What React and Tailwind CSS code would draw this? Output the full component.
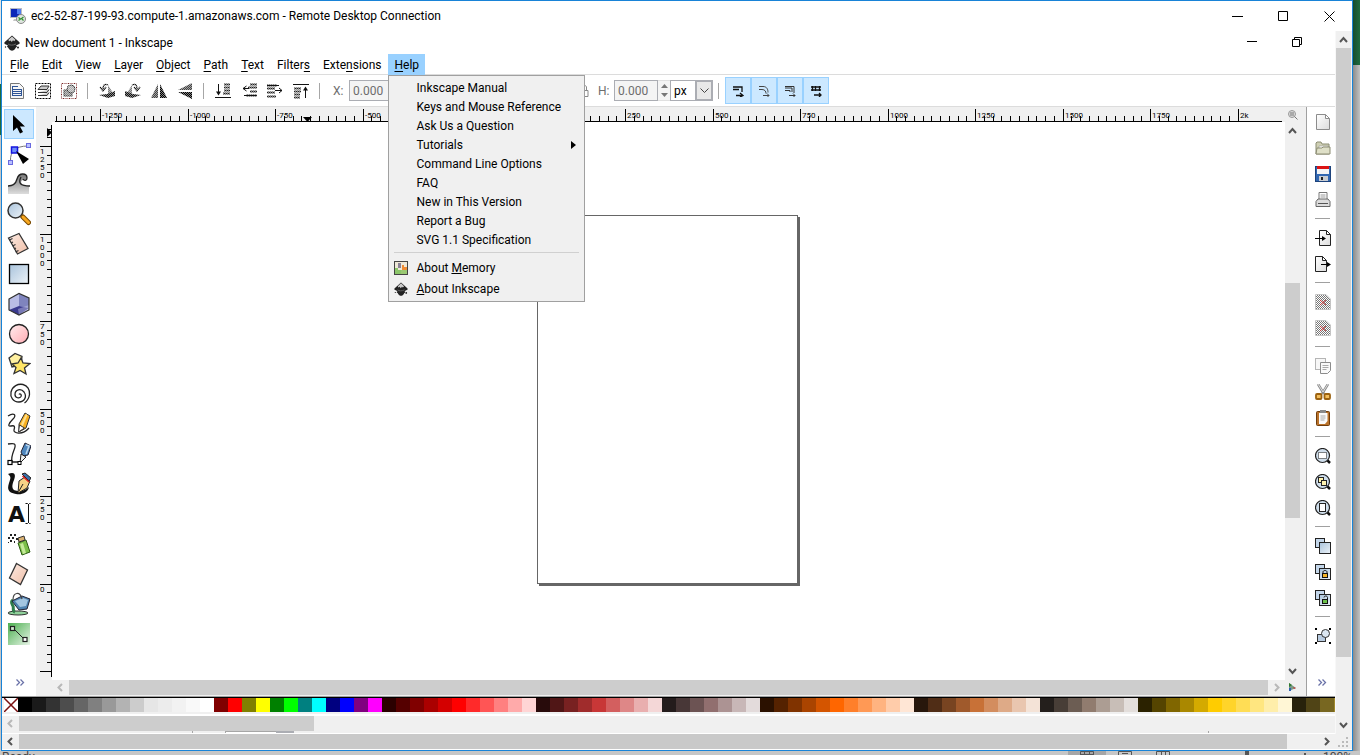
const PALETTE = [
  "#000000", "#1a1a1a", "#333333", "#4d4d4d", "#666666", "#808080", "#999999", "#b3b3b3", "#cccccc", "#e6e6e6", "#ececec", "#f2f2f2", "#f9f9f9", "#ffffff",
  "#800000", "#ff0000", "#808000", "#ffff00", "#008000", "#00ff00", "#008080", "#00ffff", "#000080", "#0000ff", "#800080", "#ff00ff",
  "#2b0000", "#550000", "#800000", "#aa0000", "#d40000", "#ff0000", "#ff2a2a", "#ff5555", "#ff8080", "#ffaaaa", "#ffd5d5",
  "#280b0b", "#501616", "#782121", "#a02c2c", "#c83737", "#d35f5f", "#de8787", "#e9afaf", "#f4d7d7",
  "#241c1c", "#483737", "#6c5353", "#916f6f", "#ac9393", "#c8b7b7", "#e3dbdb",
  "#2b1100", "#552200", "#803300", "#aa4400", "#d45500", "#ff6600", "#ff7f2a", "#ff9955", "#ffb380", "#ffccaa", "#ffe6d5",
  "#28170b", "#502d16", "#784421", "#a05a2c", "#c87137", "#d38d5f", "#deaa87", "#e9c6af", "#f4e3d7",
  "#241f1c", "#483e37", "#6c5d53", "#917c6f", "#ac9d93", "#c8beb7", "#e3dedb",
  "#2b2200", "#554400", "#806600", "#aa8800", "#d4aa00", "#ffcc00", "#ffd42a", "#ffdd55", "#ffe680", "#ffeeaa", "#fff6d5",
  "#28220b", "#504416", "#786721", "#a0892c",
];

// [before, mnemonic, after]
const MENUS = [
  ["", "F", "ile"],
  ["", "E", "dit"],
  ["", "V", "iew"],
  ["", "L", "ayer"],
  ["", "O", "bject"],
  ["", "P", "ath"],
  ["", "T", "ext"],
  ["Filter", "s", ""],
  ["Exte", "n", "sions"],
  ["", "H", "elp"],
];

const HELP_ITEMS = [
  "Inkscape Manual",
  "Keys and Mouse Reference",
  "Ask Us a Question",
  "Tutorials",
  "Command Line Options",
  "FAQ",
  "New in This Version",
  "Report a Bug",
  "SVG 1.1 Specification",
];

const STEP = 8.75;

function Icon({ size = 24, box = 24, children }) {
  return (
    <svg width={size} height={size} viewBox={`0 0 ${box} ${box}`} fill="none" aria-hidden="true" className="shrink-0">
      {children}
    </svg>
  );
}

function Defs() {
  return (
    <svg width="0" height="0" className="absolute" aria-hidden="true">
      <defs>
        <linearGradient id="blue" x1="0" y1="0" x2="1" y2="1">
          <stop offset="0" stopColor="#a9c3dc" />
          <stop offset="1" stopColor="#edf3f8" />
        </linearGradient>
        <linearGradient id="pink" x1="0" y1="0" x2="1" y2="1">
          <stop offset="0" stopColor="#ffeeee" />
          <stop offset="1" stopColor="#ffabb3" />
        </linearGradient>
        <linearGradient id="tan" x1="0" y1="0" x2="1" y2="1">
          <stop offset="0" stopColor="#fbeae2" />
          <stop offset="1" stopColor="#f0bfa8" />
        </linearGradient>
        <linearGradient id="green" x1="0" y1="0" x2="1" y2="1">
          <stop offset="0" stopColor="#4caf50" />
          <stop offset="1" stopColor="#e8f5e8" />
        </linearGradient>
        <linearGradient id="gray" x1="0" y1="0" x2="0" y2="1">
          <stop offset="0" stopColor="#777" />
          <stop offset="1" stopColor="#ddd" />
        </linearGradient>
        <linearGradient id="sheet" x1="0" y1="0" x2="1" y2="1">
          <stop offset="0" stopColor="#fff" />
          <stop offset="1" stopColor="#dcdcdc" />
        </linearGradient>
        <pattern id="dots" width="2" height="2" patternUnits="userSpaceOnUse">
          <rect width="1" height="1" fill="#fff" shapeRendering="crispEdges" />
          <rect x="1" y="1" width="1" height="1" fill="#fff" shapeRendering="crispEdges" />
        </pattern>
      </defs>
    </svg>
  );
}

function InkscapeLogo({ size }) {
  return (
    <Icon size={size} box={16}>
      <path d="M8 .5 15.200 7c1 1 .3 2-1.200 2.500L12 10.500c1.500.6 1 1.500 0 2-.8.5-.5 1-1 1.500-1 1.200-2 1.700-3 1.700S6 15.200 5 14c-.5-.5-.2-1-1-1.500-1-.5-1.500-1.400 0-2l-2-1C.5 9-.2 8 .8 7z" fill="#222" />
      <path d="m8 1.500 3.500 3.300-1.300 1.400L9 5.300 7.800 7 6.500 5.500 5 6.300l-.6-1.500z" fill="#ccc" />
      <path d="M4 9c2 1.500 5 1.500 8 0" stroke="#777" strokeWidth=".8" />
      <circle cx="14" cy="12.500" r="1" fill="#222" />
      <circle cx="1.500" cy="12" r=".7" fill="#222" />
    </Icon>
  );
}

function RemoteIcon() {
  return (
    <Icon size={16} box={16}>
      <rect x=".5" y=".5" width="11" height="9" fill="#0a26b8" stroke="#b8bcc4" />
      <path d="M7 1h4v5H7z" fill="#4f7cf0" />
      <path d="M4 11h4l1 2H3z" fill="#c4c4c4" />
      <circle cx="11" cy="11" r="4.500" fill="#dfe5df" stroke="#8a8a8a" />
      <path d="m8.500 9.500 2 1.500-2 1.500M13.500 9l-2 1.500 2 2" stroke="#2f8f2f" strokeWidth="1.200" />
    </Icon>
  );
}

const TOOLS = [
  ["Select", <path d="M6 3v16l4-3.500 3 6 3-1.500-3-5.500h5z" fill="#000" />],
  ["Edit nodes", <>
    <path d="M3.500 19C3 10 8 4 21 4" stroke="#777" />
    <rect x="1.500" y="18.500" width="4" height="4" fill="#b8c0ff" stroke="#6a6ae0" />
    <rect x="19.500" y="1.500" width="4" height="4" fill="#b8c0ff" stroke="#6a6ae0" />
    <rect x="4.500" y="5" width="6" height="6" fill="#6d8cf8" stroke="#1414e0" strokeWidth="1.500" />
    <path d="m9 9 13 8-6 5z" fill="#000" />
  </>],
  ["Tweak", <>
    <path d="M1 22v-8c5 0 8-2 9-7 1-6 10-6 10-1 0 2-2 3-3 2-4-1-5 6 5 6v8z" fill="url(#gray)" />
    <path d="M1 14c6 0 8-3 9-7 2-7 10-6 10-1 0 3-3 3-4 1M14 5c-3 6-1 9 9 9" stroke="#222" strokeWidth="1.300" />
  </>],
  ["Zoom", <>
    <circle cx="8.500" cy="8.500" r="7.500" fill="url(#blue)" stroke="#333" strokeWidth="1.500" />
    <path d="m14 14 3 2" stroke="#555" strokeWidth="3" />
    <path d="m16 15 5.500 5.500" stroke="#7a4a00" strokeWidth="5" strokeLinecap="round" />
    <path d="m16 15 5.500 5.500" stroke="#f8a820" strokeWidth="3" strokeLinecap="round" />
  </>],
  ["Measure", <>
    <path d="M1.500 6 12 1.500l9 15L10.500 22z" fill="url(#tan)" stroke="#333" strokeWidth="1.300" />
    <path d="m2.500 8 3-1.500m-1.500 4.500 2-1m-.5 4 3-1.500m-1.500 4.500 2-1m-.5 4 3-1.500" stroke="#333" strokeWidth="1.200" />
  </>],
  ["Rectangle", <rect x="2.500" y="2.500" width="19" height="19" fill="url(#blue)" stroke="#000" strokeWidth="1.300" />],
  ["3D box", <>
    <path d="m2 7 10-5.500L22 6v12l-10 5-10-5z" fill="#b9bde6" />
    <path d="m12 1.500 10 4.500v10l-10-2z" fill="#7f84be" />
    <path d="M2 18 12 14l10 2-10 7z" fill="#3a3a90" />
    <path d="m12 23-1-6 11-4v5z" fill="#d7d9f2" opacity=".4" />
    <path d="m2 7 10-5.500L22 6v12l-10 5-10-5z" stroke="#333" strokeWidth="1.200" />
  </>],
  ["Ellipse", <circle cx="12" cy="12" r="9.500" fill="url(#pink)" stroke="#222" strokeWidth="1.300" />],
  ["Star", <>
    <path d="M2 6 8 1.500l7 3L14 13l-9 2z" fill="#fff0a0" stroke="#333" strokeWidth="1.300" />
    <path d="m14 6 2 5 7 .5-5.500 4.500 1.500 6-6-3.500-6 3 2-6L5 12l6-1z" fill="#ffe566" stroke="#333" strokeWidth="1.300" />
  </>],
  ["Spiral", <path d="M12 12.500c1-1.500 3 0 2 2-1.500 2.500-6 1.500-6-2 0-5 6-6.500 9-2.500 3.500 5 0 10-5 10-6 0-9-5-8-10C5.500 4 11 1.500 16 2.500c4.500 1 7 5.500 6.500 10-.5 4-3 7-5 8.500" stroke="#222" strokeWidth="1.300" />],
  ["Pencil", <>
    <path d="M1 4c6-4 9-1 5 3s-6 8-2 7 4 1 3 4 8 6 15-2" stroke="#222" strokeWidth="1.300" />
    <path d="m12 12 6-11 5 3-4 12-7 4z" fill="#f8b020" stroke="#333" />
    <path d="m14 12 5-10 1.500 1-5 12z" fill="#ffe08a" />
    <path d="m11.500 20 1-7 5 3z" fill="#fff" stroke="#333" />
  </>],
  ["Bezier", <>
    <path d="M1 2c6-1 9-1 6 6-2 5-3 8-2 12h8" stroke="#222" strokeWidth="1.300" />
    <path d="m14 10 4-9 6 3-3 9-5 1z" fill="#4d86bd" stroke="#223" />
    <path d="m19 3 3 1-3 8" stroke="#b9d5ee" strokeWidth="1.500" />
    <path d="m14 12 5 3-6 6z" fill="#eee" stroke="#222" />
    <rect x="1" y="18.500" width="4" height="4" fill="#fff" stroke="#000" strokeWidth="1.200" />
    <rect x="11" y="19.500" width="3" height="3" fill="#fff" stroke="#000" />
  </>],
  ["Calligraphy", <>
    <path d="M1 2c7-3 8 1 6 6-3 7-2 11 4 11 4 0 8-1 11-4-1 6-8 8-13 7C1 21 0 17 2 11s2-6-1-9z" fill="#111" />
    <path d="m12 9 6-4 5 4-3 7-9 5z" fill="#f7d287" stroke="#222" />
    <path d="m12 19 4-7" stroke="#222" />
    <path d="m15 2 3-1 6 5-2 3z" fill="#3b6fa8" stroke="#222" />
    <path d="m15.500 4 6.500 6" stroke="#d22" strokeWidth="1.500" />
  </>],
  ["Text", <>
    <text x="1" y="20" fontFamily="'DejaVu Sans', sans-serif" fontWeight="700" fontSize="22" fill="#111">A</text>
    <path d="M18.500 1.500h2l1 1 1-1h1M21.500 2v19M18.500 21.500h2l1-1 1 1h1" stroke="#111" />
  </>],
  ["Spray", <>
    <path d="m11 11 8-3 4 12-8 3z" fill="#7cc04a" stroke="#2c5a14" />
    <path d="m13 12 3-1 3 10-3 1z" fill="#c5ea9a" />
    <path d="m11 6 6-2 1 4-6 2z" fill="#d9b070" stroke="#333" />
    <path d="M3 2h2v2H3zM7 2h2v2H7zM1 5h2v2H1zM5 5h2v2H5zM9 6h2v2H9zM3 8h2v2H3zM7 9h1v2H7zM1 10h1v1H1z" fill="#222" />
  </>],
  ["Eraser", <path d="m9.500 1.500 11 6.500-7 14.500L2.500 16z" fill="url(#tan)" stroke="#333" strokeWidth="1.300" />],
  ["Paint bucket", <>
    <ellipse cx="11" cy="21" rx="10" ry="2" fill="#8fd19a" stroke="#333" />
    <path d="M6 8c-3 2-1 4 0 6s-1 5 2 6" stroke="#2f7d4b" strokeWidth="3" />
    <path d="m5 9 10-5 8 3-3 10-8 1z" fill="#4f83b0" stroke="#223" />
    <path d="m8 9 8-3 5 2-2 6-6 1z" fill="#a4c6e0" />
    <path d="M6 8c0-8 7-9 9-1" stroke="#444" strokeWidth="1.200" />
  </>],
  ["Gradient", <>
    <rect x="1" y="1" width="22" height="22" fill="url(#green)" />
    <path d="m7 7 10 10" stroke="#222" />
    <rect x="3.500" y="4.500" width="4" height="4" fill="#cfe9d0" stroke="#222" strokeWidth="1.200" />
    <rect x="16" y="15.500" width="4" height="4" fill="#fff" stroke="#222" strokeWidth="1.200" />
  </>],
];

const Lens = ({ children }) => (
  <>
    <path d="m12 12 3 3" stroke="#111" strokeWidth="2.500" />
    <circle cx="7.500" cy="7.500" r="7" fill="#cfdeec" stroke="#222" strokeWidth="1.200" />
    {children}
  </>
);

const Missing = () => (
  <>
    <path d="M1 1h10l4 4v10H1z" fill="#777" />
    <rect width="16" height="16" fill="url(#dots)" />
    <path d="M.5.5h10.500l4.500 4.500v10.500H.5z" stroke="#c4c4c4" />
    <path d="m5 6 6 5m0-5-6 5" stroke="#c44" />
  </>
);

const Clones = ({ children }) => (
  <>
    <rect x=".5" y=".5" width="9" height="9" fill="#c3d6ea" stroke="#222" />
    <rect x="4.500" y="4.500" width="11" height="11" fill="url(#blue)" stroke="#222" />
    {children}
  </>
);

const COMMANDS = [
  ["New", <path d="M1.500.5h9l4 4v11h-13zM10.500.5v4h4" fill="url(#sheet)" stroke="#8c8c8c" />],
  ["Open", <>
    <path d="M1 14V3l1-1h4l1 2h7v10z" fill="#cfd0b4" stroke="#8b8c72" />
    <path d="M4 6h9v3H4z" fill="#fff" stroke="#999" strokeWidth=".6" />
    <path d="m1 14 1-6h5l1-1h7v7z" fill="#dfe0c8" stroke="#8b8c72" />
  </>],
  ["Save", <>
    <rect x=".5" y=".5" width="15" height="15" fill="#3267b0" stroke="#1d437c" />
    <rect x="2" y="1" width="12" height="7" fill="#f4f4f4" />
    <rect x="2" y="0" width="12" height="3" fill="#dc1414" />
    <rect x="4" y="10" width="9" height="5" fill="#c9cdd2" />
    <rect x="6" y="11" width="2" height="3" fill="#222" />
  </>],
  ["Print", <>
    <path d="M4 8V.500h8V8" fill="#fff" stroke="#777" />
    <path d="M5.500 3h5m-5 2h5" stroke="#999" />
    <path d="M1 9.500 3 7h10l2 2.500v5H1z" fill="#ddd" stroke="#666" />
    <path d="M3 11.500h10" stroke="#555" />
  </>],
  null,
  ["Import", <>
    <path d="M4.500.5h7l4 4v11h-11zM11.500.5v4h4" fill="url(#sheet)" stroke="#222" />
    <path d="M0 8.500h8" stroke="#000" />
    <path d="m7 6 4 2.500L7 11z" fill="#000" />
  </>],
  ["Export", <>
    <path d="M.5.5h7l4 4v11H.5zM7.500.5v4h4" fill="url(#sheet)" stroke="#222" />
    <path d="M6 8.500h8" stroke="#000" />
    <path d="m12 6 4 2.500-4 2.500z" fill="#000" />
  </>],
  null,
  ["Undo", <Missing />],
  ["Redo", <Missing />],
  null,
  ["Copy", <>
    <rect x=".5" y=".5" width="10" height="11" fill="#f7f7f7" stroke="#b5b5b5" />
    <path d="M5.500 4.500h10v8l-3 3h-7z" fill="#fafafa" stroke="#8c8c8c" />
    <path d="M7.500 7.500h6m-6 2h6m-6 2h4" stroke="#aaa" />
  </>],
  ["Cut", <>
    <path d="m3 0 6 10M13 0 7 10" stroke="#8c8c8c" strokeWidth="2.500" />
    <path d="m3 0 5 8M13 0 8 8" stroke="#e0e0e0" />
    <rect x="1" y="10" width="5.500" height="5" rx="1" fill="#f3bd5b" stroke="#9c6210" strokeWidth="1.800" />
    <rect x="9.500" y="10" width="5.500" height="5" rx="1" fill="#f3bd5b" stroke="#9c6210" strokeWidth="1.800" />
  </>],
  ["Paste", <>
    <rect x="1.500" y="1.500" width="13" height="14" rx="1" fill="#b9722a" stroke="#6f3c0c" />
    <path d="M4 3h8.500v8L10 14H4z" fill="#fafafa" />
    <rect x="5" y="0" width="6" height="3" fill="#8a8a8a" />
    <path d="M5.500 6h5m-5 2h5m-5 2h4" stroke="#aaa" />
  </>],
  null,
  ["Zoom selection", <Lens><rect x="3.500" y="4.500" width="8" height="6" fill="#fff" stroke="#111" strokeDasharray="1 1" /></Lens>],
  ["Zoom drawing", <Lens>
    <rect x="3.500" y="3.500" width="5" height="5" fill="#fff3b0" stroke="#222" />
    <rect x="6.500" y="6.500" width="5" height="5" fill="#fff3b0" stroke="#222" />
  </Lens>],
  ["Zoom page", <Lens><rect x="4.500" y="3.500" width="6" height="8" fill="#fff" stroke="#222" /></Lens>],
  null,
  ["Duplicate", <Clones />],
  ["Clone", <Clones>
    <path d="M8 9.500V8c0-2 4-2 4 0v1.500" stroke="#111" />
    <rect x="7.500" y="9.500" width="5" height="4" fill="#f5b42a" stroke="#111" />
  </Clones>],
  ["Unlink clone", <Clones>
    <path d="M9 7.500c0-2 3.500-2 3.500 0v2" stroke="#111" />
    <rect x="7.500" y="9.500" width="5" height="4" fill="#6cc24a" stroke="#111" />
  </Clones>],
  null,
  ["Group", <>
    <rect x="2.500" y="6.500" width="8" height="7" fill="#b8cbe0" stroke="#333" />
    <circle cx="10.500" cy="5.500" r="4" fill="#dbe6f1" stroke="#333" />
    <path d="M0 0h2v2H0zM14 0h2v2h-2zM0 14h2v2H0zM14 14h2v2h-2z" fill="#000" />
  </>],
];

// disabled toolbar glyphs are dimmed by a checkerboard laid over them
const Dim = () => <rect width="16" height="16" fill="url(#dots)" opacity=".5" />;

const SELECT_ICONS = [
  [
    ["Select all", <>
      <path d="M1.500.5h9l4 4v11h-13z" fill="#f6f6f6" stroke="#777" />
      <path d="M4 3.500h5M4 6.500h8M4 8.500h8M4 10.500h8M4 12.500h8M3.500 3v10M12.500 6v7" stroke="#2f5597" />
    </>],
    ["Select all in layers", <>
      <rect x=".5" y=".5" width="15" height="15" stroke="#000" strokeDasharray="2 1" />
      <path d="M3 6.500 6 3h8l-2 3.500zM3 9.500h9l2-3M3 12.500h9l2-3" fill="#ccc" stroke="#333" />
    </>],
    ["Deselect", <>
      <rect x=".5" y=".5" width="15" height="15" stroke="#722" strokeDasharray="2 1" />
      <rect x="3" y="7" width="8" height="6" fill="#888" stroke="#333" />
      <circle cx="10" cy="6" r="4" fill="#aaa" stroke="#333" />
      <Dim />
    </>],
  ],
  [
    ["Rotate left", <>
      <path d="M9 12V2l5 8z" fill="#777" />
      <path d="M0 12l9 3 7-2v-5l-5 2-3 1z" fill="#111" />
      <path d="M9 2C5 0 4 3 4 6M1 4l3 4 3-4" stroke="#111" strokeWidth="1.300" />
      <Dim />
    </>],
    ["Rotate right", <>
      <path d="M7 12V2l-5 8z" fill="#777" />
      <path d="M16 12l-9 3-7-2V8l5 2 3 1z" fill="#111" />
      <path d="M7 2c4-2 5 1 5 4m3-2-3 4-3-4" stroke="#111" strokeWidth="1.300" />
      <Dim />
    </>],
    ["Flip horizontal", <>
      <path d="M7 1v14H0z" fill="#444" />
      <path d="M9 1v14h7z" fill="#000" />
      <Dim />
    </>],
    ["Flip vertical", <>
      <path d="M1 7h14V0z" fill="#444" />
      <path d="M1 9h14v7z" fill="#000" />
      <Dim />
    </>],
  ],
  [
    ["Lower to bottom", <>
      <path d="M9 1.500h6M9 4.500h6M9 7.500h6M8 10.500h7" stroke="#222" strokeWidth="2" />
      <Dim />
      <path d="M0 14.500h16M3.500 1v9" stroke="#111" />
      <path d="M1 8.500h5l-2.500 4z" fill="#111" />
    </>],
    ["Lower", <>
      <path d="M9 1.500h7M9 8.500h7M5 12.500h11M7 4.500h9" stroke="#222" strokeWidth="2" />
      <Dim />
      <path d="M8 5.500H2M5.500 3 2 5.500 5.500 8M3 12.500h12" stroke="#111" />
    </>],
    ["Raise", <>
      <path d="M0 2.500h10M0 5.500h8M0 9.500h8M0 13.500h9" stroke="#222" strokeWidth="2" />
      <Dim />
      <path d="M8 7.500h7M12 5l3 2.500L12 10M0 2.500h12" stroke="#111" />
    </>],
    ["Raise to top", <>
      <path d="M1 5.500h7M1 8.500h7M1 11.500h6M1 14.500h6" stroke="#222" strokeWidth="2" />
      <Dim />
      <path d="M0 1.500h16M12.500 15V5" stroke="#111" />
      <path d="M10 7.500h5l-2.500-4z" fill="#111" />
    </>],
  ],
];

const SNAP_ICONS = [
  ["Scale stroke width", <path d="M1 2h9v5M1 4.500h6M4 10.500h6M8 8l3 2.500L8 12" stroke="#111" strokeWidth="1.300" />],
  ["Scale rounded corners", <path d="M1 1.500h4c4 0 5 3 5 6M1 4.500h3c3 0 4 2 4 4M5 10.500h6M9 8.500l2 2-2 2" stroke="#444" />],
  ["Move gradients", <path d="M1 1.500h9V8M1 3h7v4M1 5.500h5v1.500M5 10.500h6M9 8.500l2 2-2 2" stroke="#333" />],
  ["Move patterns", <path d="M1 2h10M1 5h10M2.500 1v5M5.500 1v5M9.500 1v5M4 10h7M9 8l2 2-2 2" stroke="#111" strokeWidth="1.300" />],
];

function Arrow({ dir, faded }) {
  const paths = { up: "m1 7 3.500-4L8 7", down: "m1 2 3.500 4L8 2", left: "M6 1 2.500 4.500 6 8", right: "m3 1 3.500 3.500L3 8" };
  const vertical = dir === "up" || dir === "down";
  return (
    <button
      aria-label={`Scroll ${dir}`}
      className={vertical ? "flex h-[17px] w-[15px] shrink-0 items-center justify-center" : "flex h-[15px] w-[17px] shrink-0 items-center justify-center"}
    >
      <svg width="9" height="9" fill="none" aria-hidden="true">
        <path d={paths[dir]} stroke={faded ? "#b8b8b8" : "#555"} strokeWidth="2" />
      </svg>
    </button>
  );
}

function ToolSeparator() {
  return <span className="mr-1.5 ml-[5px] h-4 w-px shrink-0 bg-[#a6a6a6]" />;
}

function NumberField({ label }) {
  return (
    <div className="flex shrink-0 items-center">
      <label htmlFor={`field-${label}`} className="w-4 text-[#6d6d6d]">{label}:</label>
      <input
        id={`field-${label}`}
        defaultValue="0.000"
        className="h-[21px] w-11 border border-[#abadb3] bg-[#f4f4f4] px-[3px] text-[#6d6d6d] outline-none"
      />
      <span className="flex h-[21px] w-3 flex-col items-center justify-around border-y border-[#e0e0e0] bg-[#f4f4f4]">
        <svg width="7" height="4" aria-hidden="true"><path d="M0 4h7L3.500 0z" fill="#777" /></svg>
        <svg width="7" height="4" aria-hidden="true"><path d="M0 0h7L3.500 4z" fill="#777" /></svg>
      </span>
    </div>
  );
}

function TitleBar() {
  return (
    <header className="flex h-[30px] shrink-0 items-center bg-white">
      <span className="ml-2 flex"><RemoteIcon /></span>
      <h1 className="ml-[5px]">ec2-52-87-199-93.compute-1.amazonaws.com - Remote Desktop Connection</h1>
      <div className="ml-auto flex h-full">
        <button aria-label="Minimize" className="flex w-[46px] items-center justify-center">
          <svg width="11" height="11" aria-hidden="true"><path d="M0 5h11v1H0z" /></svg>
        </button>
        <button aria-label="Maximize" className="flex w-[46px] items-center justify-center">
          <svg width="11" height="11" fill="none" aria-hidden="true"><path d="M.5.5h9v9h-9z" stroke="#000" /></svg>
        </button>
        <button aria-label="Close" className="flex w-[46px] items-center justify-center">
          <svg width="11" height="11" fill="none" aria-hidden="true"><path d="m.5.5 10 10m0-10-10 10" stroke="#000" /></svg>
        </button>
      </div>
    </header>
  );
}

function AppTitle() {
  return (
    <div className="flex h-[23px] shrink-0 items-center bg-white">
      <span className="ml-0.5 flex"><InkscapeLogo size={16} /></span>
      <h2 className="ml-[5px]">New document 1 - Inkscape</h2>
      <div className="mr-4 ml-auto flex h-full">
        <button aria-label="Minimize document" className="flex w-[45px] items-center justify-center">
          <svg width="10" height="11" aria-hidden="true"><path d="M0 4h10v1H0z" /></svg>
        </button>
        <button aria-label="Restore document" className="flex w-[45px] items-center justify-center">
          <svg width="10" height="13" fill="none" aria-hidden="true"><path d="M.5 3.500h7v7h-7zM2.500 3V1.500h7v7H8" stroke="#000" /></svg>
        </button>
      </div>
    </div>
  );
}

function HelpMenu() {
  return (
    <ul role="menu" className="absolute top-[21px] left-0 z-10 w-[197px] border border-[#a0a0a0] bg-[#f0f0f0] py-0.5">
      {HELP_ITEMS.map((item) => (
        <li key={item}>
          <button role="menuitem" className="flex h-[19px] w-full items-center justify-between pr-2 pl-[27px] whitespace-nowrap">
            {item}
            {item === "Tutorials" && (
              <svg width="5" height="8" aria-hidden="true"><path d="M0 0v8l5-4z" /></svg>
            )}
          </button>
        </li>
      ))}
      <li role="separator" className="mx-[5px] mt-[3px] mb-1 h-px bg-[#d0d0d0]" />
      <li>
        <button role="menuitem" className="flex h-[21px] w-full items-center gap-2 pl-[5px]">
          <Icon size={14} box={14}>
            <rect x=".5" y=".5" width="13" height="13" fill="#eee8d8" stroke="#444" />
            <path d="M1 7h3v2h3v4H1z" fill="#8cc66a" />
            <path d="M4 2h3v5H4z" fill="#8a8296" />
            <path d="M8 4h2v2h3v3H8z" fill="#ef8c35" />
            <path d="M7 9h6v4H7z" fill="#9bc973" />
          </Icon>
          <span>About <u>M</u>emory</span>
        </button>
      </li>
      <li>
        <button role="menuitem" className="flex h-[21px] w-full items-center gap-2 pl-[5px]">
          <InkscapeLogo size={14} />
          <span><u>A</u>bout Inkscape</span>
        </button>
      </li>
    </ul>
  );
}

function MenuBar() {
  return (
    <nav className="flex h-[21px] shrink-0 gap-px border-b border-[#dcdcdc] bg-white pl-0.5">
      {MENUS.map(([before, key, after]) => {
        const open = key === "H";
        return (
          <div key={key + after} className="relative">
            <button className={open ? "h-[21px] bg-[#99d1ff] px-1.5" : "h-[21px] px-1.5"}>
              {before}<u className="underline-offset-2">{key}</u>{after}
            </button>
            {open && <HelpMenu />}
          </div>
        );
      })}
    </nav>
  );
}

function ControlsBar() {
  return (
    <div className="flex h-8 shrink-0 items-center border-b border-[#dcdcdc] bg-white pl-0.5">
      {SELECT_ICONS.map((group, i) => (
        <div key={i} className="flex items-center">
          {group.map(([label, art]) => (
            <button key={label} aria-label={label} className="flex size-[26px] items-center justify-center">
              <Icon size={16} box={16}>{art}</Icon>
            </button>
          ))}
          <ToolSeparator />
        </div>
      ))}
      <div className="ml-[7px] flex items-center gap-2.5">
        <NumberField label="X" />
        <NumberField label="Y" />
        <NumberField label="W" />
      </div>
      <button aria-label="Lock proportions" className="mx-1.5 flex h-4 w-[17px] items-center justify-center">
        <svg width="10" height="12" fill="none" aria-hidden="true"><path d="M2.500 5V2c0-2 5-2 5 0v3M1 5.500h8v6H1z" stroke="#888" /></svg>
      </button>
      <NumberField label="H" />
      <div className="relative">
        <select aria-label="Unit" className="block h-[21px] w-[43px] appearance-none border border-[#abadb3] bg-white pl-[3px] outline-none">
          <option>px</option>
          <option>mm</option>
        </select>
        <span className="pointer-events-none absolute inset-y-0 right-0 flex w-[18px] items-center justify-center border-2 border-[#abadb3] bg-[#e8e8e8]">
          <svg width="9" height="6" fill="none" aria-hidden="true"><path d="m.5.5 4 4 4-4" stroke="#444" /></svg>
        </span>
      </div>
      <ToolSeparator />
      <div className="flex">
        {SNAP_ICONS.map(([label, art]) => (
          <button key={label} aria-label={label} className="flex h-[27px] w-[26px] items-center justify-center border border-[#99d1ff] bg-[#cce8ff]">
            <Icon size={12} box={12}>{art}</Icon>
          </button>
        ))}
      </div>
    </div>
  );
}

function Toolbox() {
  return (
    <aside className="flex w-[34px] shrink-0 flex-col bg-white pt-0.5 pl-0.5">
      {TOOLS.map(([label, art]) => (
        <button
          key={label}
          aria-label={label}
          className={
            label === "Select"
              ? "flex h-[30px] w-[30px] shrink-0 items-center justify-center border border-[#99d1ff] bg-[#cce8ff]"
              : "flex h-[30px] w-[30px] shrink-0 items-center justify-center"
          }
        >
          <Icon>{art}</Icon>
        </button>
      ))}
      <MoreButton />
    </aside>
  );
}

function MoreButton() {
  return (
    <button aria-label="More" className="mt-auto mb-2 flex h-3 items-center justify-center">
      <svg width="9" height="7" fill="none" aria-hidden="true"><path d="m.5.5 3 3-3 3m4-6 3 3-3 3" stroke="#6a72a8" strokeWidth="1.300" /></svg>
    </button>
  );
}

function HorizontalRuler() {
  const ticks = Array.from({ length: 136 }, (_, i) => i - 5);
  return (
    <svg className="block h-full w-full" aria-hidden="true">
      <path d="M3 14h1227v1H3z" />
      {ticks.map((i) => {
        const x = Math.round(48 + i * STEP);
        const major = i % 10 === 0;
        const value = -1250 + i * 25;
        return (
          <g key={i}>
            <rect x={x} y={major ? 2 : 9} width="1" height={major ? 13 : 6} />
            {major && (
              <text x={x + 2} y="11" fontSize="8">{value === 2000 ? "2k" : value}</text>
            )}
          </g>
        );
      })}
      <path d="M251 10h9l-4.500 5z" />
    </svg>
  );
}

function VerticalRuler() {
  const ticks = Array.from({ length: 63 }, (_, i) => i - 2);
  return (
    <svg className="block h-full w-full" aria-hidden="true">
      <path d="M15 3h1v552h-1z" />
      {ticks.map((i) => {
        const y = Math.round(24 + i * STEP);
        const major = i % 10 === 0;
        const digits = String(1250 - i * 25).split("");
        return (
          <g key={i}>
            <rect x={major ? 4 : 11} y={y} width={major ? 12 : 5} height="1" />
            {major && i < 60 && digits.map((d, n) => (
              <text key={n} x="4" y={y + 8 + n * 8} fontSize="8">{d}</text>
            ))}
          </g>
        );
      })}
      <path d="M11 6v9l5-4.500z" />
    </svg>
  );
}

function Canvas() {
  return (
    <main className="grid min-w-0 flex-1 grid-cols-[16px_1fr_15px] grid-rows-[15px_1fr_15px] bg-[#f0f0f0] pr-1.5 pb-px">
      <span />
      <HorizontalRuler />
      <button aria-label="Toggle zoom" className="flex items-center justify-center">
        <svg width="10" height="10" fill="none" aria-hidden="true">
          <circle cx="4" cy="4" r="3.500" fill="#ddd" stroke="#999" />
          <path d="M3 2v4M5 2v4M6.500 6.500l3 3" stroke="#777" />
        </svg>
      </button>

      <VerticalRuler />
      <div className="relative overflow-hidden bg-white">
        <div className="absolute top-[93px] left-[485px] h-[369px] w-[261px] border border-[#666] bg-white shadow-[2px_2px_0_#666]" />
      </div>
      <div className="flex min-h-0 flex-col">
        <Arrow dir="up" />
        <div className="flex-1">
          <div className="mt-36 h-[235px] bg-[#cdcdcd]" />
        </div>
        <Arrow dir="down" />
      </div>

      <span />
      <div className="flex h-[15px] items-center">
        <Arrow dir="left" faded />
        <div className="h-full flex-1 bg-[#cdcdcd]" />
        <Arrow dir="right" faded />
      </div>
      <span className="flex items-center justify-center">
        <svg width="9" height="9" aria-hidden="true">
          <path d="M1 0v8l7-3z" fill="#7a9a86" />
          <path d="m1 0 3 2-3 2z" fill="#2f7a2f" />
          <path d="m5 4 3 1-2 1z" fill="#c33" />
          <path d="M1 5h2v3H1z" fill="#2b5fb0" />
        </svg>
      </span>
    </main>
  );
}

function CommandBar() {
  return (
    <aside className="flex w-[29px] shrink-0 flex-col border-l border-[#a0a0a0] bg-white pt-0.5 pl-[3px]">
      {COMMANDS.map((command, i) =>
        command ? (
          <button key={command[0]} aria-label={command[0]} className="flex size-[26px] shrink-0 items-center justify-center">
            <Icon size={16} box={16}>{command[1]}</Icon>
          </button>
        ) : (
          <span key={i} className="mx-[5px] my-[5px] h-0.5 shrink-0 border-t border-[#a0a0a0]" />
        )
      )}
      <MoreButton />
    </aside>
  );
}

function Palette() {
  return (
    <footer className="shrink-0 border-t border-[#a0a0a0] bg-[#f0f0f0]">
      <div className="flex h-[15px] overflow-hidden border-t border-black pl-0.5">
        <button aria-label="No color" className="w-3.5 shrink-0 bg-white">
          <svg width="14" height="14" fill="none" aria-hidden="true"><path d="m0 0 14 14M14 0 0 14" stroke="#7a1010" strokeWidth="1.500" /></svg>
        </button>
        {PALETTE.map((color, i) => (
          <button key={i} aria-label={color} className="w-3.5 shrink-0" style={{ backgroundColor: color }} />
        ))}
      </div>
      <div className="mt-0.5 h-0.5 bg-white" />
      <div className="flex h-[15px] items-center">
        <Arrow dir="left" faded />
        <div className="h-full w-[295px] bg-[#cdcdcd]" />
      </div>
      <div className="flex h-[3px] items-end border-b border-white">
        <span className="ml-[190px] h-0.5 w-px bg-[#a6a6a6]" />
        <span className="ml-8 h-0.5 w-[51px] border-t border-l border-[#a6a6a6] bg-white" />
        <span className="h-0.5 w-[18px] bg-[#abadb3]" />
        <span className="mr-[126px] ml-auto h-0.5 w-px bg-[#a6a6a6]" />
      </div>
    </footer>
  );
}

export default function App() {
  return (
    <div className="flex h-screen flex-col overflow-hidden bg-[#c6c6c6] font-[Roboto,sans-serif] text-xs text-black select-none">
      <Defs />
      <div className="flex min-h-0 flex-1">
        <div className="flex w-px shrink-0 flex-col">
          <div className="h-[84px] bg-[#e4e4e4]" />
          <div className="h-[51px] bg-[#1e6b3f]" />
        </div>
        <div className="flex min-w-0 flex-1 flex-col border border-[#1883d7] bg-[#f0f0f0]">
          <TitleBar />
          <div className="flex min-h-0 flex-1">
            <div className="flex min-w-0 flex-1 flex-col">
              <AppTitle />
              <MenuBar />
              <ControlsBar />
              <div className="flex min-h-0 flex-1">
                <Toolbox />
                <Canvas />
                <CommandBar />
              </div>
              <Palette />
            </div>
            <div className="flex w-[17px] shrink-0 flex-col border-l border-[#f8f8f8]">
              <Arrow dir="up" />
              <div className="flex-1">
                <div className="mr-px h-[91%] bg-[#cdcdcd]" />
              </div>
              <Arrow dir="down" />
            </div>
          </div>
          <div className="flex h-4 shrink-0 items-center border-b border-white">
            <Arrow dir="left" />
            <div className="mr-[31px] h-full flex-1 bg-[#c9c9c9]" />
            <Arrow dir="right" />
            <svg width="17" height="15" aria-hidden="true">
              <path d="M11 3h2v2h-2zM7 7h2v2H7zM11 7h2v2h-2zM3 11h2v2H3zM7 11h2v2H7zM11 11h2v2h-2z" fill="#bbb" />
            </svg>
          </div>
        </div>
        <div className="flex w-[7px] shrink-0 flex-col">
          <div className="h-[65px] bg-linear-to-r from-[#174d2f] to-[#1e6b3f]" />
          <div className="flex-1 bg-linear-to-r from-[#8c8c8c] to-[#c2c2c2]" />
        </div>
      </div>
      <div className="flex h-1 shrink-0 overflow-hidden text-[#444]">
        <span className="ml-0.5 leading-3">Ready</span>
        <span className="ml-auto flex h-1 w-[38px] justify-center bg-[#a6a6a6]">
          <svg width="14" height="4" fill="none" aria-hidden="true"><path d="M.5 4V.5h13V4M4.500 0v4M9.500 0v4M0 3.500h14" stroke="#555" /></svg>
        </span>
        <svg width="205" height="4" fill="none" className="ml-3" aria-hidden="true">
          <path d="M.5 4V.5h13V4M4 2.500h6M38.500 4V.5h13V4M43.500 0v4M47.500 0v4" stroke="#555" />
          <path d="M127 0h4v4h-4zM186 2h2v2h-2z" fill="#555" />
        </svg>
        <span className="mr-2 leading-3">100%</span>
      </div>
    </div>
  );
}
